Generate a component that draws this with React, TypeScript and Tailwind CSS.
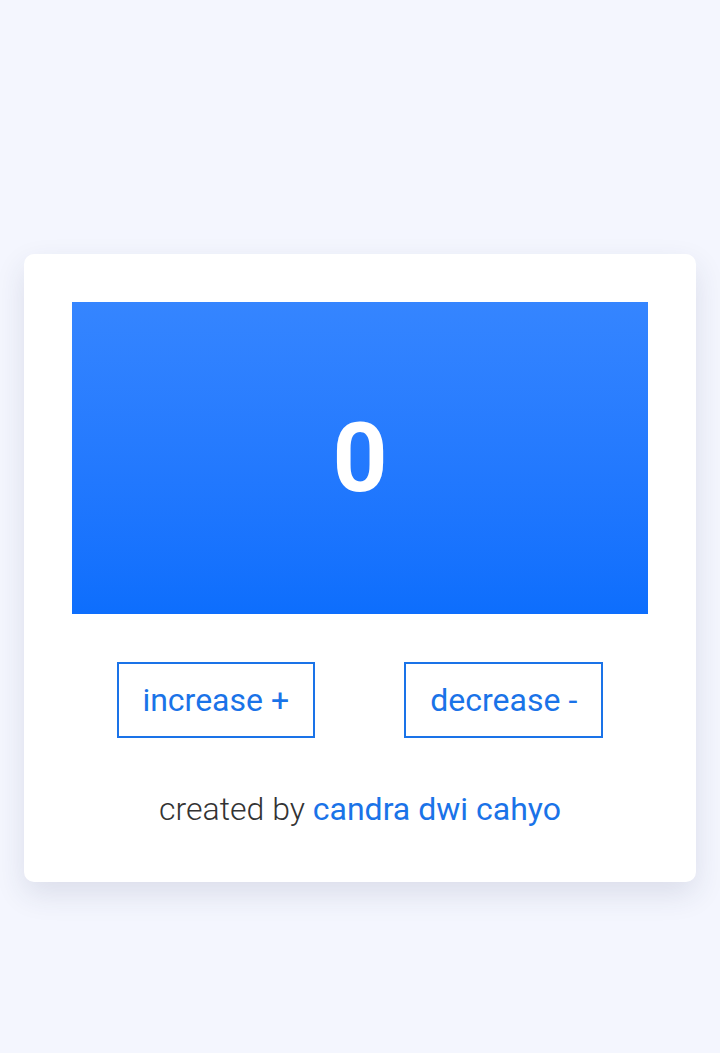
import React, { useState } from "react";

export default function App() {
  const [count, setCount] = useState(0);
  return (
    <div
      className="min-h-[1053px] bg-[#f4f6fe] px-6 pt-[254px]"
      style={{ fontFamily: "Roboto, 'Liberation Sans', sans-serif" }}
    >
      <div className="rounded-[10px] bg-white px-12 pt-12 pb-[52px] shadow-[0_12px_30px_rgba(40,50,90,0.12)]">
        <div className="flex h-[312px] items-center justify-center bg-gradient-to-b from-[#3585ff] to-[#0d6efd]">
          <span className="text-[96px] font-bold leading-none text-white">{count}</span>
        </div>
        <div className="mt-12 flex justify-around">
          <button
            onClick={() => setCount(count + 1)}
            className="h-[76px] w-[198px] border-2 border-[#1a73e8] text-[32px] text-[#1a73e8]"
          >
            increase +
          </button>
          <button
            onClick={() => setCount(count - 1)}
            className="h-[76px] w-[199px] border-2 border-[#1a73e8] text-[32px] text-[#1a73e8]"
          >
            decrease -
          </button>
        </div>
        <p className="mt-[50px] text-center text-[32px] leading-[42px] text-[#333]">
          <span className="font-light">created by </span>
          <span className="text-[#1a73e8]">candra dwi cahyo</span>
        </p>
      </div>
    </div>
  );
}
